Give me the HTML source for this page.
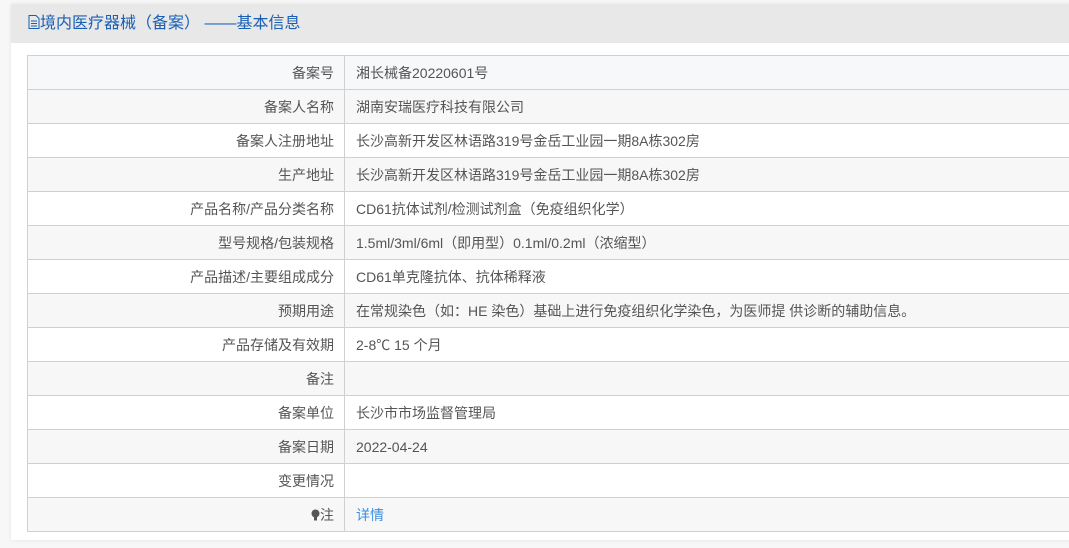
<!DOCTYPE html>
<html><head><meta charset="utf-8"><style>
body{margin:0;background:#f7f7f7;width:1069px;height:548px;overflow:hidden;font-family:"Liberation Sans","Noto Sans CJK SC",sans-serif;}
.panel{position:absolute;left:11px;top:4px;width:1070px;height:536px;background:#fff;box-shadow:0 0 4px rgba(0,0,0,.08);}
.hd{height:39px;background:#e8e8e8;color:#1a5fb4;font-size:16px;line-height:39px;padding-left:17px;}
table{position:absolute;left:16px;top:51px;border-collapse:collapse;width:1060px;font-size:14px;color:#555;}
td{border:1px solid #d0d0d0;height:33px;padding:0;}
td.l{width:306px;text-align:right;padding-right:10px;}
td.v{padding-left:11px;border-right:none;}
tr:nth-child(even) td{background:#f7f7f7;}
tr:first-child td{background:#f7f8fa;}
a{color:#3d8fe0;text-decoration:none;}
</style></head><body>
<div class="panel">
<div class="hd"><svg width="12" height="14" viewBox="0 0 12 14" style="vertical-align:-1px"><path d="M1 .5h7l3 3v10H1z" fill="none" stroke="#1a5fb4"/><path d="M3 6h6M3 8.5h6M3 11h6" stroke="#1a5fb4"/></svg>境内医疗器械（备案） ——基本信息</div>
<table>
<tr><td class="l">备案号</td><td class="v">湘长械备20220601号</td></tr>
<tr><td class="l">备案人名称</td><td class="v">湖南安瑞医疗科技有限公司</td></tr>
<tr><td class="l">备案人注册地址</td><td class="v">长沙高新开发区林语路319号金岳工业园一期8A栋302房</td></tr>
<tr><td class="l">生产地址</td><td class="v">长沙高新开发区林语路319号金岳工业园一期8A栋302房</td></tr>
<tr><td class="l">产品名称/产品分类名称</td><td class="v">CD61抗体试剂/检测试剂盒（免疫组织化学）</td></tr>
<tr><td class="l">型号规格/包装规格</td><td class="v">1.5ml/3ml/6ml（即用型）0.1ml/0.2ml（浓缩型）</td></tr>
<tr><td class="l">产品描述/主要组成成分</td><td class="v">CD61单克隆抗体、抗体稀释液</td></tr>
<tr><td class="l">预期用途</td><td class="v">在常规染色（如：HE 染色）基础上进行免疫组织化学染色，为医师提 供诊断的辅助信息。</td></tr>
<tr><td class="l">产品存储及有效期</td><td class="v">2-8℃ 15 个月</td></tr>
<tr><td class="l">备注</td><td class="v"></td></tr>
<tr><td class="l">备案单位</td><td class="v">长沙市市场监督管理局</td></tr>
<tr><td class="l">备案日期</td><td class="v">2022-04-24</td></tr>
<tr><td class="l">变更情况</td><td class="v"></td></tr>
<tr><td class="l"><svg width="9" height="12" viewBox="0 0 9 12" style="vertical-align:-1px"><circle cx="4.5" cy="4.5" r="4" fill="#555"/><rect x="3" y="8" width="3" height="3.5" fill="#555"/></svg>注</td><td class="v"><a>详情</a></td></tr>
</table>
</div>
</body></html>
